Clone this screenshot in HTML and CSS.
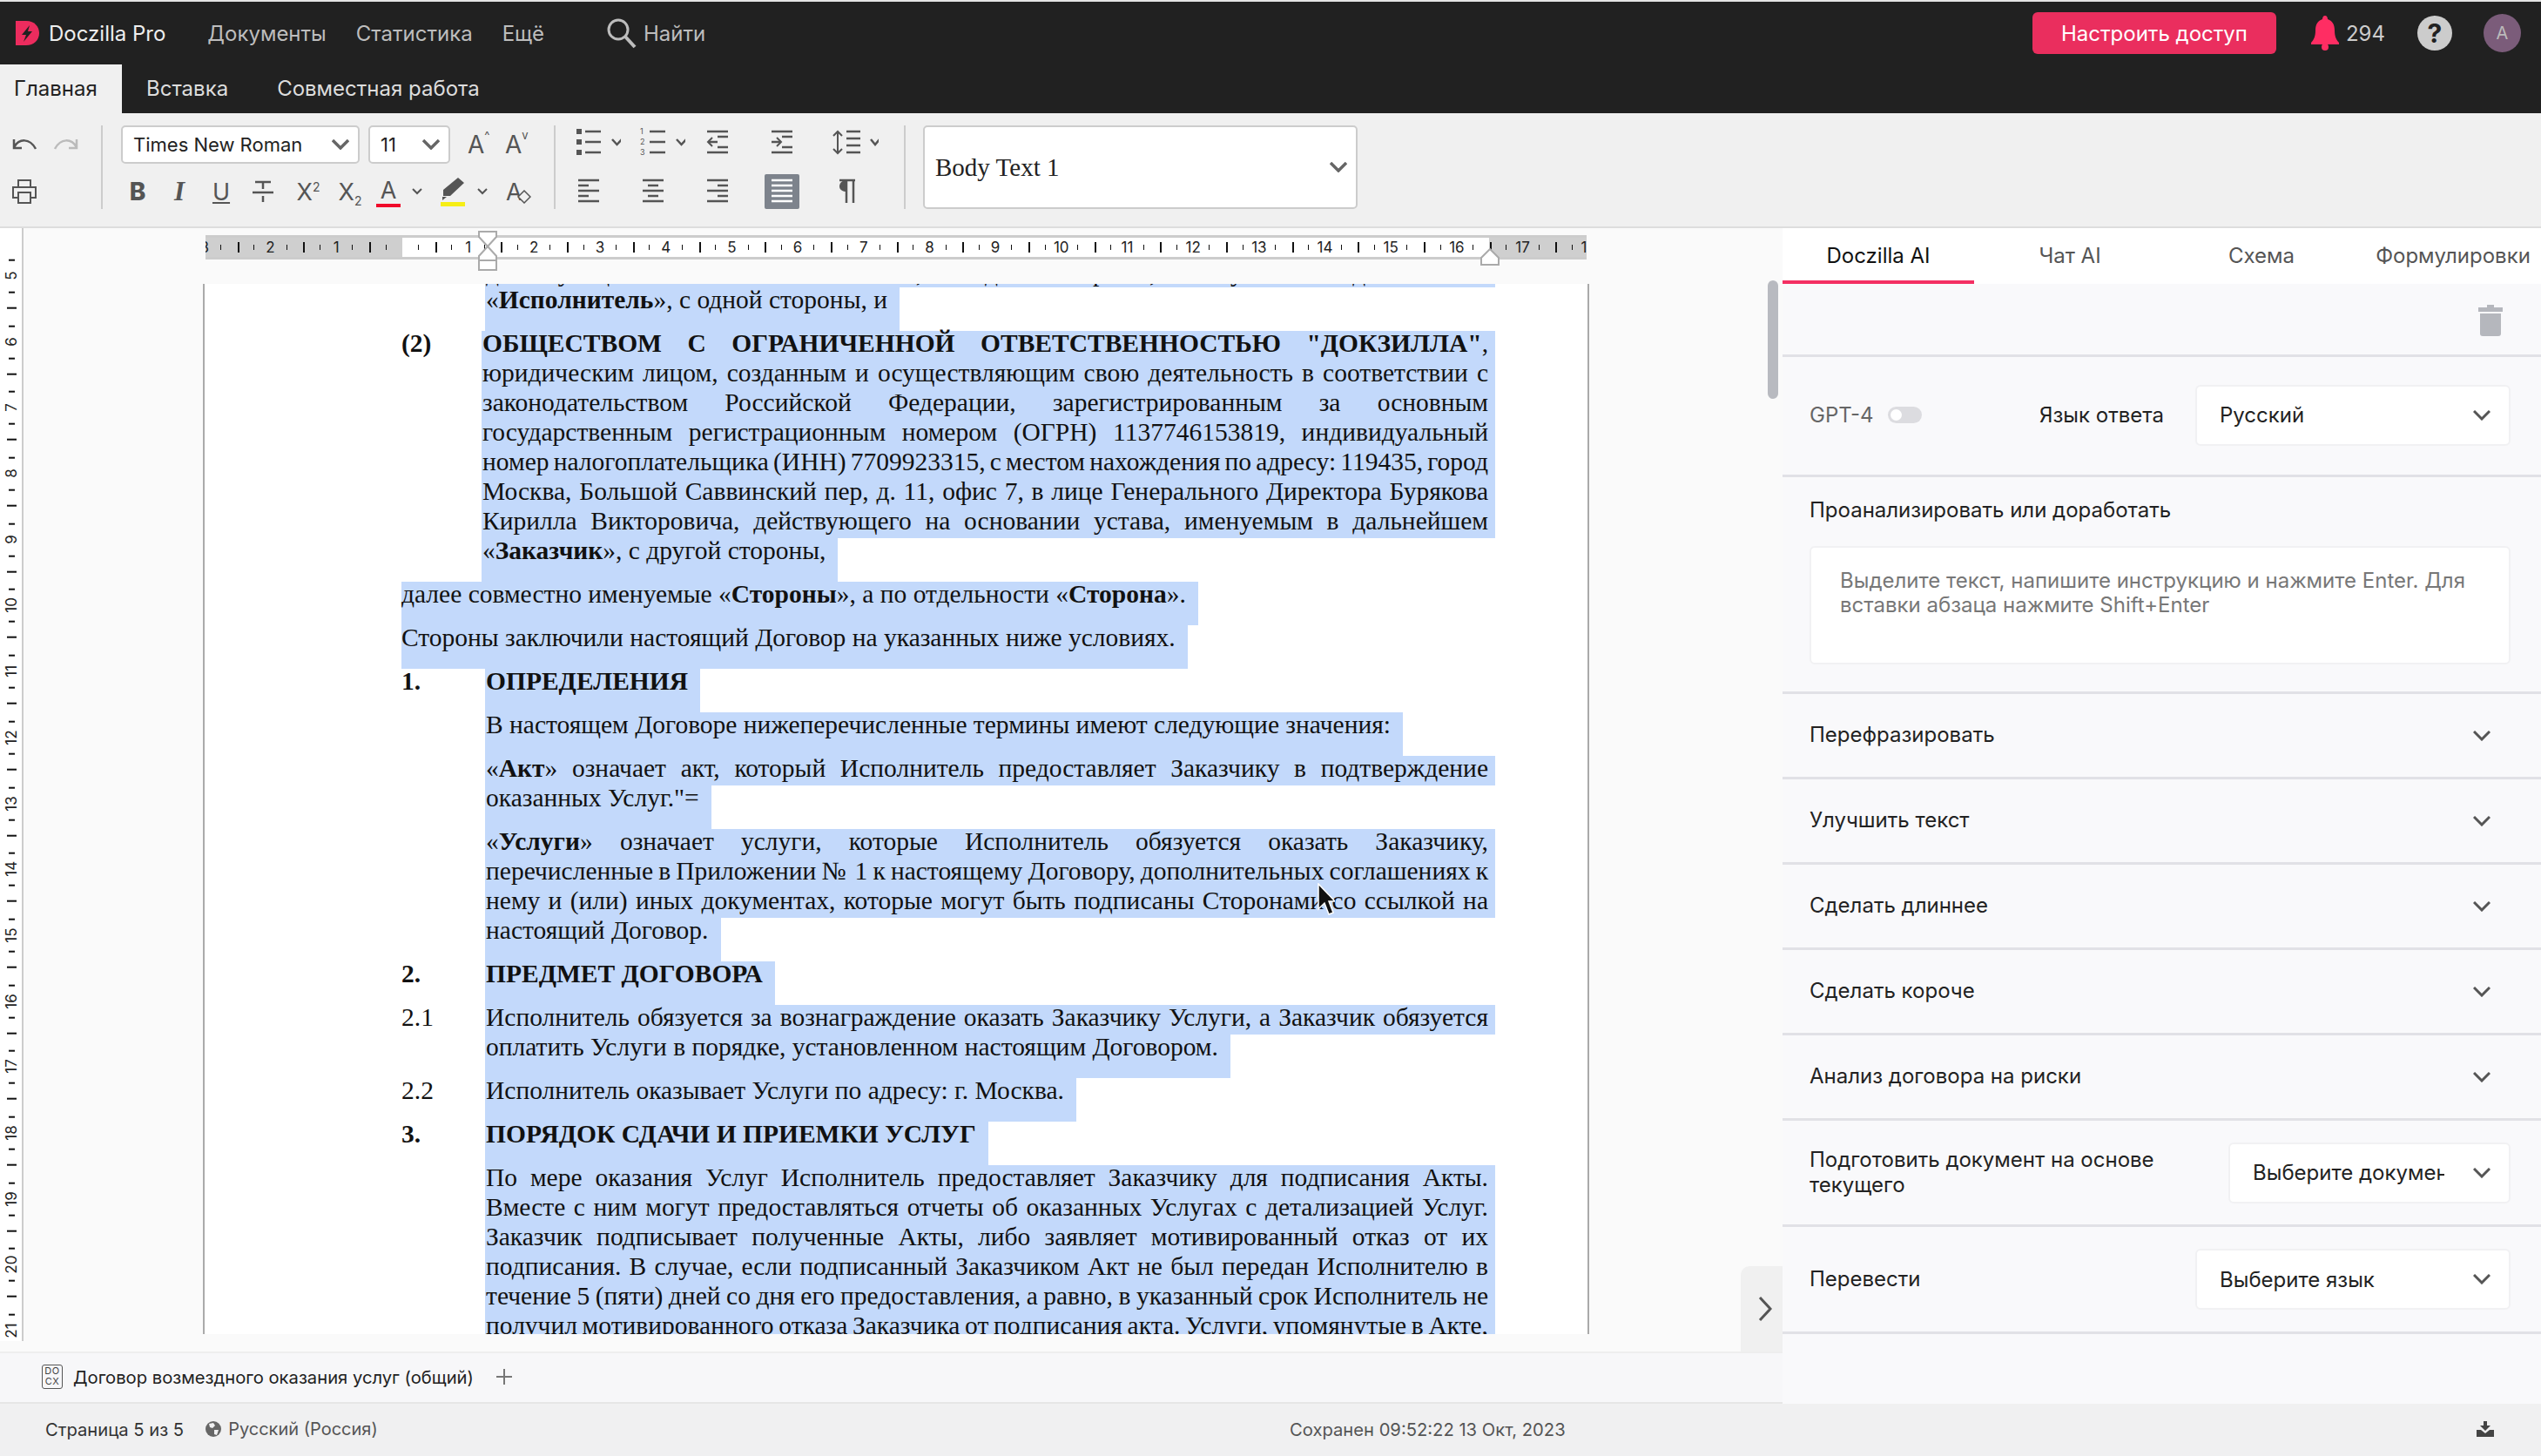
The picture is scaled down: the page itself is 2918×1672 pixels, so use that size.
FILE: index.html
```html
<!DOCTYPE html>
<html lang="ru">
<head>
  <meta charset="UTF-8" />
  <title>Doczilla Pro</title>
  <link rel="stylesheet" href="styles.css">
</head>
<body>
<div class="app">

  <header class="topbar">
    <div class="nav-row">
      <svg class="logo" width="28" height="28" viewBox="0 0 28 28"><path d="M0 0H12C22 0 27 7 27 14C27 22 21 28 12 28H0Z" fill="#ec2c5e"/><path d="M16 5L7 16H12L9 24L19 12H14Z" fill="#212121"/></svg>
      <span class="brand">Doczilla Pro</span>
      <a class="nav-link nav-first">Документы</a>
      <a class="nav-link">Статистика</a>
      <a class="nav-link">Ещё</a>
      <svg class="search-icon" width="36" height="36" viewBox="0 0 36 36"><circle cx="14" cy="14" r="11" fill="none" stroke="#bdbdbd" stroke-width="3"/><path d="M22 22L33 34" stroke="#bdbdbd" stroke-width="4"/></svg>
      <span class="search-label">Найти</span>
      <button class="share-btn">Настроить доступ</button>
      <svg class="bell" width="32" height="40" viewBox="0 0 32 40"><path d="M16 0C18 0 19 2 19 4C25 6 27 11 27 17C27 24 29 28 32 31V33H0V31C3 28 5 24 5 17C5 11 7 6 13 4C13 2 14 0 16 0Z" fill="#ff2d63"/><circle cx="16" cy="36" r="4" fill="#ff2d63"/></svg>
      <span class="bell-count">294</span>
      <span class="help">?</span>
      <span class="avatar">A</span>
    </div>
    <div class="tab-row">
      <a class="ribbon-tab active">Главная</a>
      <a class="ribbon-tab">Вставка</a>
      <a class="ribbon-tab">Совместная работа</a>
    </div>
  </header>

  <section class="toolbar">
    <div class="tb-group tb-history">
      <div class="history-row">
        <svg width="28" height="14" viewBox="0 0 28 14" fill="none" stroke="#555" stroke-width="2.5"><path d="M2 2V12H11M2 11C8 1 20 0 27 13"/></svg>
        <svg width="28" height="14" viewBox="0 0 28 14" fill="none" stroke="#bbb" stroke-width="2.5"><path d="M26 2V12H17M26 11C20 1 8 0 1 13"/></svg>
      </div>
      <svg class="print" width="28" height="28" viewBox="0 0 28 28" fill="none" stroke="#555" stroke-width="2"><path d="M7 9V1H21V9M7 21H1V9H27V21H21"/><path d="M7 15H21V27H7Z"/></svg>
    </div>

    <div class="tb-group tb-font">
      <div class="font-row">
        <div class="tb-select font-name"><span>Times New Roman</span><svg width="20" height="12" viewBox="0 0 20 12" fill="none" stroke="#666" stroke-width="3.5"><path d="M1 1L10 10L19 1"/></svg></div>
        <div class="tb-select font-size"><span>11</span><svg width="20" height="12" viewBox="0 0 20 12" fill="none" stroke="#666" stroke-width="3.5"><path d="M1 1L10 10L19 1"/></svg></div>
        <span class="grow-btn">A<small>^</small></span>
        <span class="grow-btn">A<small>v</small></span>
      </div>
      <div class="fmt-row">
        <span class="fmt fmt-b">B</span>
        <span class="fmt fmt-i">I</span>
        <span class="fmt fmt-u"><u>U</u></span>
        <span class="fmt"><svg width="24" height="26" viewBox="0 0 24 26" fill="none" stroke="#555" stroke-width="2.5"><path d="M3 2H21M12 2V10M0 14H24M12 18V25"/></svg></span>
        <span class="fmt fmt-sup"><span>X<sup>2</sup></span></span>
        <span class="fmt"><span>X<sub>2</sub></span></span>
        <span class="fmt fmt-color">A</span>
        <span class="mini-chev"><svg width="12" height="8" viewBox="0 0 12 8" fill="none" stroke="#555" stroke-width="2"><path d="M1 1L6 6L11 1"/></svg></span>
        <span class="fmt fmt-pen"><svg width="28" height="34" viewBox="0 0 28 34"><path d="M20 1L27 7L11 22H3V15Z M2 23H7L2 27Z" fill="#555"/><rect y="29" width="28" height="5" fill="#f6ee15"/></svg></span>
        <span class="mini-chev"><svg width="12" height="8" viewBox="0 0 12 8" fill="none" stroke="#555" stroke-width="2"><path d="M1 1L6 6L11 1"/></svg></span>
        <span class="fmt fmt-clear">A<svg width="16" height="16" viewBox="0 0 16 16" fill="#f0f0f0" stroke="#555" stroke-width="1.5"><path d="M8 1L15 8L8 15L1 8Z"/></svg></span>
      </div>
    </div>

    <div class="tb-group tb-para">
      <svg width="74" height="44" viewBox="0 0 74 44" fill="none" stroke="#555" stroke-width="2.5"><path d="M23 4h6v6h-6zM23 16h6v6h-6zM23 28h6v6h-6z" fill="#555" stroke="none"/><path d="M33 7H51M33 19H51M33 31H51M64 16L69.500 22L75 16"/></svg>
      <svg width="74" height="44" viewBox="0 0 74 44" fill="none" stroke="#555" stroke-width="2.5"><g fill="#555" stroke="none" font-family="Inter" font-size="9"><text x="22" y="10">1</text><text x="22" y="22">2</text><text x="22" y="34">3</text></g><path d="M33 7H51M33 19H51M33 31H51M64 16L69.500 22L75 16"/></svg>
      <svg width="74" height="44" viewBox="0 0 74 44" fill="none" stroke="#555" stroke-width="2.5"><path d="M25 7H49M37 13H49M37 19H26M37 25H49M25 31H49"/><path d="M31 14L26 19L31 24" stroke-width="2"/></svg>
      <svg width="74" height="44" viewBox="0 0 74 44" fill="none" stroke="#555" stroke-width="2.5"><path d="M25 7H49M37 13H49M25 19H36M37 25H49M25 31H49"/><path d="M31 14L36 19L31 24" stroke-width="2"/></svg>
      <svg width="74" height="44" viewBox="0 0 74 44" fill="none" stroke="#555" stroke-width="2.5"><path d="M37 7H53M37 15H53M37 23H53M37 31H53M65 16L70 22L75 16"/><path d="M27 7V32M22 12L27 7L32 12M22 27L27 32L32 27" stroke-width="2"/></svg>
      <svg width="74" height="40" viewBox="0 0 74 40" fill="none" stroke="#555" stroke-width="2.5"><path d="M25 7H49M25 13H37M25 19H49M25 25H37M25 31H49"/></svg>
      <svg width="74" height="40" viewBox="0 0 74 40" fill="none" stroke="#555" stroke-width="2.5"><path d="M25 7H49M31 13H43M25 19H49M31 25H43M25 31H49"/></svg>
      <svg width="74" height="40" viewBox="0 0 74 40" fill="none" stroke="#555" stroke-width="2.5"><path d="M25 7H49M37 13H49M25 19H49M37 25H49M25 31H49"/></svg>
      <svg width="74" height="40" viewBox="0 0 74 40" fill="none" stroke="#fff" stroke-width="2.5"><rect x="17" width="40" height="40" rx="2" fill="#7d838c" stroke="none"/><path d="M25 7H49M25 13H49M25 19H49M25 25H49M25 31H49"/></svg>
      <svg width="74" height="40" viewBox="0 0 74 40" fill="none" stroke="#555" stroke-width="2.5"><path d="M29 7H47M37 7V33M45 7V33"/><path d="M37 7C31 7 29 11 29 14C29 18 33 20 37 20Z" fill="#555" stroke="none"/></svg>
    </div>

    <div class="style-select"><span>Body Text 1</span><svg width="20" height="12" viewBox="0 0 20 12" fill="none" stroke="#666" stroke-width="3.5"><path d="M1 1L10 10L19 1"/></svg></div>
  </section>

  <main class="main">
    <div class="work">
      <div class="editor">
        <div class="vruler">
          <span class="vcm">5</span><span class="vcm">6</span><span class="vcm">7</span><span class="vcm">8</span><span class="vcm">9</span><span class="vcm">10</span><span class="vcm">11</span><span class="vcm">12</span><span class="vcm">13</span><span class="vcm">14</span><span class="vcm">15</span><span class="vcm">16</span><span class="vcm">17</span><span class="vcm">18</span><span class="vcm">19</span><span class="vcm">20</span><span class="vcm">21</span>
        </div>
        <div class="editor-main">
          <div class="ruler-wrap">
            <div class="hruler">
              <span class="cm">3</span><span class="cm">2</span><span class="cm">1</span><span class="cm cm-zero"></span><span class="cm">1</span><span class="cm">2</span><span class="cm">3</span><span class="cm">4</span><span class="cm">5</span><span class="cm">6</span><span class="cm">7</span><span class="cm">8</span><span class="cm">9</span><span class="cm">10</span><span class="cm">11</span><span class="cm">12</span><span class="cm">13</span><span class="cm">14</span><span class="cm">15</span><span class="cm">16</span><span class="cm">17</span><span class="cm">18</span>
            </div>
            <svg class="marker marker-left" width="22" height="46" viewBox="0 0 22 46" fill="#fff" stroke="#aaa" stroke-width="2"><path d="M1 1H21V7L11 18L1 7Z"/><path d="M11 18L21 29V34H1V29Z"/><path d="M1 34H21V45H1Z"/></svg>
            <svg class="marker marker-right" width="22" height="20" viewBox="0 0 22 20" fill="#fff" stroke="#aaa" stroke-width="2"><path d="M11 1L21 11V19H1V11Z"/></svg>
          </div>

          <div class="doc-view">
            <article class="page">
              <div class="para first">
                <div class="num"></div>
                <div class="body">
                  <div class="ln cutoff">действующего на основании Устава, с одной стороны, именуемый в дальнейшем</div>
                  <div class="ln end">«<b>Исполнитель</b>», с одной стороны, и</div>
                </div>
              </div>
              <div class="para wide">
                <div class="num"><b>(2)</b></div>
                <div class="body">
                  <div class="ln"><b>ОБЩЕСТВОМ С ОГРАНИЧЕННОЙ ОТВЕТСТВЕННОСТЬЮ "ДОКЗИЛЛА"</b>,</div>
                  <div class="ln">юридическим лицом, созданным и осуществляющим свою деятельность в соответствии с</div>
                  <div class="ln">законодательством Российской Федерации, зарегистрированным за основным</div>
                  <div class="ln">государственным регистрационным номером (ОГРН) 1137746153819, индивидуальный</div>
                  <div class="ln tight">номер налогоплательщика (ИНН) 7709923315, с местом нахождения по адресу: 119435, город</div>
                  <div class="ln">Москва, Большой Саввинский пер, д. 11, офис 7, в лице Генерального Директора Бурякова</div>
                  <div class="ln">Кирилла Викторовича, действующего на основании устава, именуемым в дальнейшем</div>
                  <div class="ln end">«<b>Заказчик</b>», с другой стороны,</div>
                </div>
              </div>
              <div class="ln end plain">далее совместно именуемые «<b>Стороны</b>», а по отдельности «<b>Сторона</b>».</div>
              <div class="ln end plain">Стороны заключили настоящий Договор на указанных ниже условиях.</div>

              <div class="para">
                <div class="num"><b>1.</b></div>
                <div class="body"><div class="ln end"><b>ОПРЕДЕЛЕНИЯ</b></div></div>
              </div>
              <div class="para">
                <div class="num"></div>
                <div class="body">
                  <div class="ln end">В настоящем Договоре нижеперечисленные термины имеют следующие значения:</div>
                  <div class="ln">«<b>Акт</b>» означает акт, который Исполнитель предоставляет Заказчику в подтверждение</div>
                  <div class="ln end">оказанных Услуг."=</div>
                  <div class="ln">«<b>Услуги</b>» означает услуги, которые Исполнитель обязуется оказать Заказчику,</div>
                  <div class="ln tight">перечисленные в Приложении № 1 к настоящему Договору, дополнительных соглашениях к</div>
                  <div class="ln">нему и (или) иных документах, которые могут быть подписаны Сторонами со ссылкой на</div>
                  <div class="ln end">настоящий Договор.</div>
                </div>
              </div>
              <div class="para">
                <div class="num"><b>2.</b></div>
                <div class="body"><div class="ln end"><b>ПРЕДМЕТ ДОГОВОРА</b></div></div>
              </div>
              <div class="para">
                <div class="num">2.1</div>
                <div class="body">
                  <div class="ln">Исполнитель обязуется за вознаграждение оказать Заказчику Услуги, а Заказчик обязуется</div>
                  <div class="ln end">оплатить Услуги в порядке, установленном настоящим Договором.</div>
                </div>
              </div>
              <div class="para">
                <div class="num">2.2</div>
                <div class="body"><div class="ln end">Исполнитель оказывает Услуги по адресу: г. Москва.</div></div>
              </div>
              <div class="para">
                <div class="num"><b>3.</b></div>
                <div class="body"><div class="ln end"><b>ПОРЯДОК СДАЧИ И ПРИЕМКИ УСЛУГ</b></div></div>
              </div>
              <div class="para">
                <div class="num"></div>
                <div class="body">
                  <div class="ln">По мере оказания Услуг Исполнитель предоставляет Заказчику для подписания Акты.</div>
                  <div class="ln">Вместе с ним могут предоставляться отчеты об оказанных Услугах с детализацией Услуг.</div>
                  <div class="ln">Заказчик подписывает полученные Акты, либо заявляет мотивированный отказ от их</div>
                  <div class="ln">подписания. В случае, если подписанный Заказчиком Акт не был передан Исполнителю в</div>
                  <div class="ln tight">течение 5 (пяти) дней со дня его предоставления, а равно, в указанный срок Исполнитель не</div>
                  <div class="ln tight">получил мотивированного отказа Заказчика от подписания акта. Услуги, упомянутые в Акте,</div>
                </div>
              </div>
            </article>
            <svg class="cursor" width="20" height="38" viewBox="0 0 20 38"><path d="M1 1V30L8 23L13 36L18 34L13 21H20Z" fill="#111" stroke="#fff" stroke-width="1.500"/></svg>
          </div>
        </div>
        <div class="scrollbar"></div>
        <div class="collapse"><svg width="16" height="28" viewBox="0 0 16 28" fill="none" stroke="#555" stroke-width="3"><path d="M2 1L14 14L2 27"/></svg></div>
      </div>
      <div class="doc-tabs">
        <span class="doc-badge">DO<br>CX</span>
        <span class="doc-name">Договор возмездного оказания услуг (общий)</span>
        <svg width="20" height="20" viewBox="0 0 20 20" stroke="#777" stroke-width="2"><path d="M10 1V19M1 10H19"/></svg>
      </div>
    </div>

    <aside class="side">
      <nav class="side-tabs">
        <a class="side-tab active">Doczilla AI</a>
        <a class="side-tab">Чат AI</a>
        <a class="side-tab">Схема</a>
        <a class="side-tab">Формулировки</a>
      </nav>
      <div class="trash-row">
        <svg width="28" height="36" viewBox="0 0 28 36" fill="#b5b7bd"><path d="M10 0H18V3H28V8H0V3H10Z"/><path d="M2 10H26V33C26 35 25 36 23 36H5C3 36 2 35 2 33Z"/></svg>
      </div>
      <div class="side-row gpt-row">
        <span class="gpt-label">GPT-4</span>
        <span class="toggle"></span>
        <span class="lang-label">Язык ответа</span>
        <div class="side-select"><span>Русский</span><svg width="20" height="12" viewBox="0 0 20 12" fill="none" stroke="#555" stroke-width="3"><path d="M1 1L10 10L19 1"/></svg></div>
      </div>
      <div class="side-row analyze">
        <div class="analyze-label">Проанализировать или доработать</div>
        <div class="prompt">Выделите текст, напишите инструкцию и нажмите Enter. Для<br>вставки абзаца нажмите Shift+Enter</div>
      </div>
      <div class="side-row action"><span>Перефразировать</span><svg width="20" height="12" viewBox="0 0 20 12" fill="none" stroke="#555" stroke-width="3"><path d="M1 1L10 10L19 1"/></svg></div>
      <div class="side-row action"><span>Улучшить текст</span><svg width="20" height="12" viewBox="0 0 20 12" fill="none" stroke="#555" stroke-width="3"><path d="M1 1L10 10L19 1"/></svg></div>
      <div class="side-row action"><span>Сделать длиннее</span><svg width="20" height="12" viewBox="0 0 20 12" fill="none" stroke="#555" stroke-width="3"><path d="M1 1L10 10L19 1"/></svg></div>
      <div class="side-row action"><span>Сделать короче</span><svg width="20" height="12" viewBox="0 0 20 12" fill="none" stroke="#555" stroke-width="3"><path d="M1 1L10 10L19 1"/></svg></div>
      <div class="side-row action"><span>Анализ договора на риски</span><svg width="20" height="12" viewBox="0 0 20 12" fill="none" stroke="#555" stroke-width="3"><path d="M1 1L10 10L19 1"/></svg></div>
      <div class="side-row action tall">
        <span class="two-line">Подготовить документ на основе<br>текущего</span>
        <div class="side-select narrow"><span class="clip">Выберите документ</span><svg width="20" height="12" viewBox="0 0 20 12" fill="none" stroke="#555" stroke-width="3"><path d="M1 1L10 10L19 1"/></svg></div>
      </div>
      <div class="side-row action tall">
        <span>Перевести</span>
        <div class="side-select"><span>Выберите язык</span><svg width="20" height="12" viewBox="0 0 20 12" fill="none" stroke="#555" stroke-width="3"><path d="M1 1L10 10L19 1"/></svg></div>
      </div>
    </aside>
  </main>

  <footer class="status">
    <div class="status-left">
      <span>Страница 5 из 5</span>
      <svg class="globe" width="18" height="18" viewBox="0 0 18 18"><circle cx="9" cy="9" r="9" fill="#666"/><path d="M4 3L9 2L11 5L8 8L5 7ZM10 10L15 10L13 16L10 15Z" fill="#f0f0f1"/></svg>
      <span class="lang">Русский (Россия)</span>
    </div>
    <span class="saved">Сохранен 09:52:22 13 Окт, 2023</span>
    <svg class="download" width="20" height="18" viewBox="0 0 20 18" fill="#444"><path d="M8 0H12V5H16L10 11L4 5H8Z"/><path d="M0 10H5L10 14L15 10H20V18H0Z"/></svg>
  </footer>
</div>
</body>
</html>
```
FILE: styles.css
```css
* {
  box-sizing: border-box;
}
html, body {
  margin: 0;
  padding: 0;
}
body {
  font-family: Inter, "Noto Sans", sans-serif;
  background: #fff;
  color: #222;
  overflow: hidden;
}
svg {
  display: block;
  flex: none;
}
.app {
  width: 2918px;
  height: 1672px;
  display: flex;
  flex-direction: column;
  border-top: 2px solid #e4e4e4;
}

/* top bar */
.topbar {
  height: 128px;
  background: #212121;
  color: #eee;
  flex: none;
}
.nav-row {
  height: 72px;
  display: flex;
  align-items: center;
  font-size: 24px;
  padding-left: 18px;
}
.brand {
  margin-left: 10px;
  color: #eee;
}
.nav-link {
  color: #bdbdbd;
  margin-left: 34px;
}
.nav-first {
  margin-left: 48px;
}
.search-icon {
  margin-left: 71px;
}
.search-label {
  color: #bdbdbd;
  margin-left: 7px;
}
.share-btn {
  margin-left: auto;
  width: 280px;
  height: 48px;
  background: #ea2e5e;
  border: none;
  border-radius: 6px;
  color: #fff;
  font-family: inherit;
  font-size: 24px;
}
.bell {
  margin-left: 40px;
}
.bell-count {
  margin-left: 8px;
  color: #ccc;
}
.help {
  margin-left: 37px;
  width: 40px;
  height: 40px;
  border-radius: 50%;
  background: #ccc;
  color: #212121;
  font-weight: 700;
  font-size: 30px;
  line-height: 40px;
  text-align: center;
}
.avatar {
  margin-left: 36px;
  margin-right: 23px;
  width: 43px;
  height: 44px;
  border-radius: 50%;
  background: #7b5c7a;
  color: #bbb;
  font-size: 20px;
  line-height: 44px;
  text-align: center;
}
.tab-row {
  height: 56px;
  display: flex;
  font-size: 24px;
}
.ribbon-tab {
  padding: 0 28px;
  line-height: 56px;
  color: #ddd;
}
.ribbon-tab.active {
  background: #f0f0f0;
  color: #222;
  width: 140px;
  padding: 0 16px;
}

/* toolbar */
.toolbar {
  height: 132px;
  flex: none;
  background: #f0f0f0;
  border-bottom: 2px solid #ddd;
  padding-top: 14px;
  display: flex;
  align-items: flex-start;
}
.tb-group {
  height: 96px;
  border-right: 2px solid #ccc;
}
.tb-history {
  width: 118px;
  padding: 14px 0 0 14px;
}
.history-row {
  display: flex;
  gap: 20px;
}
.print {
  margin-top: 34px;
}
.tb-font {
  width: 520px;
}
.font-row {
  display: flex;
  align-items: center;
  padding-left: 21px;
  height: 44px;
}
.tb-select {
  height: 44px;
  background: #fff;
  border: 2px solid #ccc;
  border-radius: 5px;
  display: flex;
  align-items: center;
  justify-content: space-between;
  font-size: 22px;
  color: #222;
}
.font-name {
  width: 274px;
  padding: 0 10px 0 12px;
}
.font-size {
  width: 94px;
  margin-left: 10px;
  padding: 0 10px 0 12px;
}
.grow-btn {
  width: 47px;
  font-size: 28px;
  color: #555;
  display: flex;
  align-items: flex-start;
  padding-left: 20px;
  line-height: 34px;
}
.grow-btn + .grow-btn {
  padding-left: 16px;
}
.grow-btn small {
  font-size: 13px;
  line-height: 12px;
}
.fmt-row {
  display: flex;
  align-items: center;
  height: 40px;
  margin-top: 12px;
  padding-left: 16px;
}
.fmt {
  width: 48px;
  height: 40px;
  display: flex;
  align-items: center;
  justify-content: center;
  font-size: 27px;
  color: #555;
}
.fmt-b {
  font-weight: 800;
  font-size: 28px;
}
.fmt-i {
  font-family: "Liberation Serif", serif;
  font-style: italic;
  font-weight: 700;
  font-size: 31px;
}
.fmt-sup {
  margin-left: 4px;
}
.fmt sup,
.fmt sub {
  font-size: 14px;
  line-height: 0;
}
.fmt-color {
  width: 40px;
  padding-bottom: 4px;
  background: linear-gradient(#f00a2a, #f00a2a) center 34px / 28px 4px no-repeat;
}
.mini-chev {
  width: 26px;
  display: flex;
  justify-content: center;
}
.fmt-pen {
  margin-left: 4px;
}
.fmt-pen + .mini-chev {
  width: 16px;
  margin-left: 2px;
}
.fmt-clear {
  margin-left: 7px;
  position: relative;
  justify-content: flex-start;
  padding-left: 12px;
  width: 44px;
}
.fmt-clear svg {
  position: absolute;
  left: 25px;
  top: 18px;
}
.tb-para {
  width: 404px;
  display: grid;
  grid-template-columns: repeat(5, 74px);
  grid-template-rows: 44px 40px;
  row-gap: 12px;
  padding-left: 3px;
  margin-left: -2px;
}
.style-select {
  margin-left: 20px;
  width: 499px;
  height: 96px;
  background: #fff;
  border: 2px solid #ccc;
  border-radius: 5px;
  display: flex;
  align-items: center;
  justify-content: space-between;
  padding: 0 10px 0 12px;
  font-family: "Liberation Serif", serif;
  font-size: 29px;
  color: #222;
}

/* workspace */
.main {
  flex: 1;
  display: flex;
  min-height: 0;
}
.work {
  width: 2047px;
  display: flex;
  flex-direction: column;
  flex: none;
}
.editor {
  flex: 1;
  display: flex;
  align-items: flex-start;
  background: #fafafa;
  position: relative;
  min-height: 0;
}
.vruler {
  width: 27px;
  height: 1278px;
  flex: none;
  background: #fff;
  border-right: 2px solid #ccc;
  padding-top: 17px;
  overflow: hidden;
}
.vcm {
  display: flex;
  align-items: center;
  justify-content: center;
  width: 25px;
  height: 75.700px;
  font-size: 17px;
  writing-mode: vertical-rl;
  color: #222;
  background:
    linear-gradient(#111, #111) 6px 0 / 11px 2px no-repeat,
    linear-gradient(#111, #111) 8px 25% / 7px 2px no-repeat,
    linear-gradient(#111, #111) 8px 75% / 7px 2px no-repeat;
  transform: rotate(180deg);
}
.editor-main {
  flex: 1;
  min-width: 0;
}
.ruler-wrap {
  height: 64px;
  padding: 8px 0 0 209px;
  position: relative;
}
.hruler {
  width: 1586px;
  height: 28px;
  display: flex;
  overflow: hidden;
  border-top: 3px solid #ccc;
  border-bottom: 3px solid #ccc;
  background: linear-gradient(to right, #cfcfcf 226px, #fff 226px, #fff 1474px, #cfcfcf 1474px);
}
.cm {
  width: 75.700px;
  flex: none;
  font-size: 17px;
  line-height: 22px;
  text-align: center;
  color: #222;
  background:
    linear-gradient(#111, #111) 25% 8px / 1px 6px no-repeat,
    linear-gradient(#111, #111) 75% 8px / 1px 6px no-repeat,
    linear-gradient(#111, #111) 0 5px / 2px 12px no-repeat;
}
.cm:first-child {
  margin-left: -39px;
}
.marker {
  position: absolute;
}
.marker-left {
  left: 522px;
  top: 3px;
}
.marker-right {
  left: 1673px;
  top: 23px;
}
.doc-view {
  height: 1206px;
  overflow: hidden;
  position: relative;
}
.page {
  margin: 0 0 0 206px;
  width: 1592px;
  height: 1206px;
  overflow: hidden;
  background: #fff;
  border-left: 2px solid #aaa;
  border-right: 2px solid #aaa;
  padding-left: 226px;
  font-family: "Liberation Serif", serif;
  font-size: 29.500px;
  color: #111;
}
.para {
  display: flex;
}
.first {
  margin-top: -30px;
}
.num {
  width: 96px;
  flex: none;
  line-height: 28px;
}
.wide .num {
  width: 92px;
}
.body {
  width: 1160px;
  flex: none;
}
.wide .body {
  width: 1164px;
}
.ln {
  height: 34px;
  line-height: 28px;
  padding: 0 8px 6px 1px;
  background: #c3d9fb;
  text-align: justify;
  text-align-last: justify;
  word-spacing: -1px;
}
.ln.cutoff {
  line-height: 34px;
  padding-bottom: 0;
}
.ln.tight {
  word-spacing: -5px;
}
.ln.end {
  height: 50px;
  width: fit-content;
  padding-right: 14px;
  padding-bottom: 22px;
  text-align: left;
  text-align-last: left;
  word-spacing: 0;
}
.ln.plain {
  padding-left: 0;
}
.cursor {
  position: absolute;
  left: 1486px;
  top: 688px;
}
.scrollbar {
  position: absolute;
  left: 2030px;
  top: 60px;
  width: 12px;
  height: 136px;
  border-radius: 6px;
  background: #b8bac0;
}
.collapse {
  position: absolute;
  left: 1999px;
  top: 1192px;
  width: 48px;
  height: 98px;
  border-radius: 10px 0 0 0;
  background: #f0f0f0;
  display: flex;
  align-items: center;
  padding-left: 20px;
}
.doc-tabs {
  height: 60px;
  flex: none;
  background: #f7f7f9;
  border-top: 2px solid #eee;
  border-bottom: 2px solid #e6e6e6;
  display: flex;
  align-items: center;
  padding: 0 0 2px 48px;
  font-size: 20.200px;
  color: #222;
}
.doc-badge {
  width: 24px;
  height: 28px;
  border: 1.500px solid #555;
  border-radius: 3px;
  font-size: 11px;
  line-height: 12px;
  letter-spacing: 0.500px;
  text-align: center;
  color: #444;
}
.doc-name {
  margin: 0 25px 0 12px;
}

/* right panel */
.side {
  flex: 1;
  background: #f9f9fb;
  min-width: 0;
  overflow: hidden;
  font-size: 24px;
}
.side-tabs {
  height: 64px;
  display: grid;
  grid-template-columns: repeat(4, 220px);
  background: #fff;
}
.side-tab {
  text-align: center;
  line-height: 64px;
  color: #555;
  white-space: nowrap;
}
.side-tab.active {
  color: #111;
  border-bottom: 4px solid #f42f63;
  height: 64px;
}
.trash-row {
  height: 84px;
  border-bottom: 3px solid #e1e1e6;
  padding: 24px 0 0 799px;
}
.side-row {
  border-bottom: 3px solid #e1e1e6;
  padding: 0 35px 0 31px;
  color: #222;
}
.gpt-row {
  height: 138px;
  display: flex;
  align-items: center;
  padding-bottom: 2px;
}
.gpt-label {
  color: #666;
  width: 90px;
}
.toggle {
  width: 39px;
  height: 19px;
  border-radius: 10px;
  background: #dcdce0;
  position: relative;
  flex: none;
}
.toggle::after {
  content: "";
  position: absolute;
  left: 3px;
  top: 3px;
  width: 13px;
  height: 13px;
  border-radius: 50%;
  background: #fff;
}
.lang-label {
  margin-left: 135px;
}
.side-select {
  margin-left: auto;
  width: 362px;
  height: 70px;
  background: #fff;
  border: 2px solid #f1f1f3;
  border-radius: 6px;
  display: flex;
  align-items: center;
  justify-content: space-between;
  padding: 0 21px 0 26px;
  color: #222;
}
.side-select.narrow {
  width: 324px;
}
.clip {
  width: 220px;
  overflow: hidden;
  white-space: nowrap;
}
.analyze {
  height: 249px;
  padding-top: 24px;
}
.analyze-label {
  line-height: 28px;
}
.prompt {
  margin-top: 27px;
  height: 136px;
  background: #fff;
  border: 2px solid #f1f1f3;
  border-radius: 6px;
  padding: 24px 33px;
  color: #777;
  line-height: 28px;
}
.action {
  height: 98px;
  display: flex;
  align-items: center;
  justify-content: space-between;
}
.action > span {
  margin-top: -2px;
}
.action > svg {
  margin-right: 23px;
}
.tall {
  height: 122px;
}
.tall + .tall {
  height: 123px;
}
.two-line {
  line-height: 29px;
}

/* status bar */
.status {
  height: 60px;
  flex: none;
  background: #f0f0f1;
  display: flex;
  align-items: center;
  font-size: 20.200px;
  color: #333;
  padding: 0 54px 2px 0;
}
.status-left {
  width: 1481px;
  padding-left: 52px;
  display: flex;
  align-items: center;
}
.globe {
  margin: 0 8px 0 25px;
}
.lang {
  color: #555;
  font-size: 20px;
}
.saved {
  color: #555;
}
.download {
  margin-left: auto;
}
```
